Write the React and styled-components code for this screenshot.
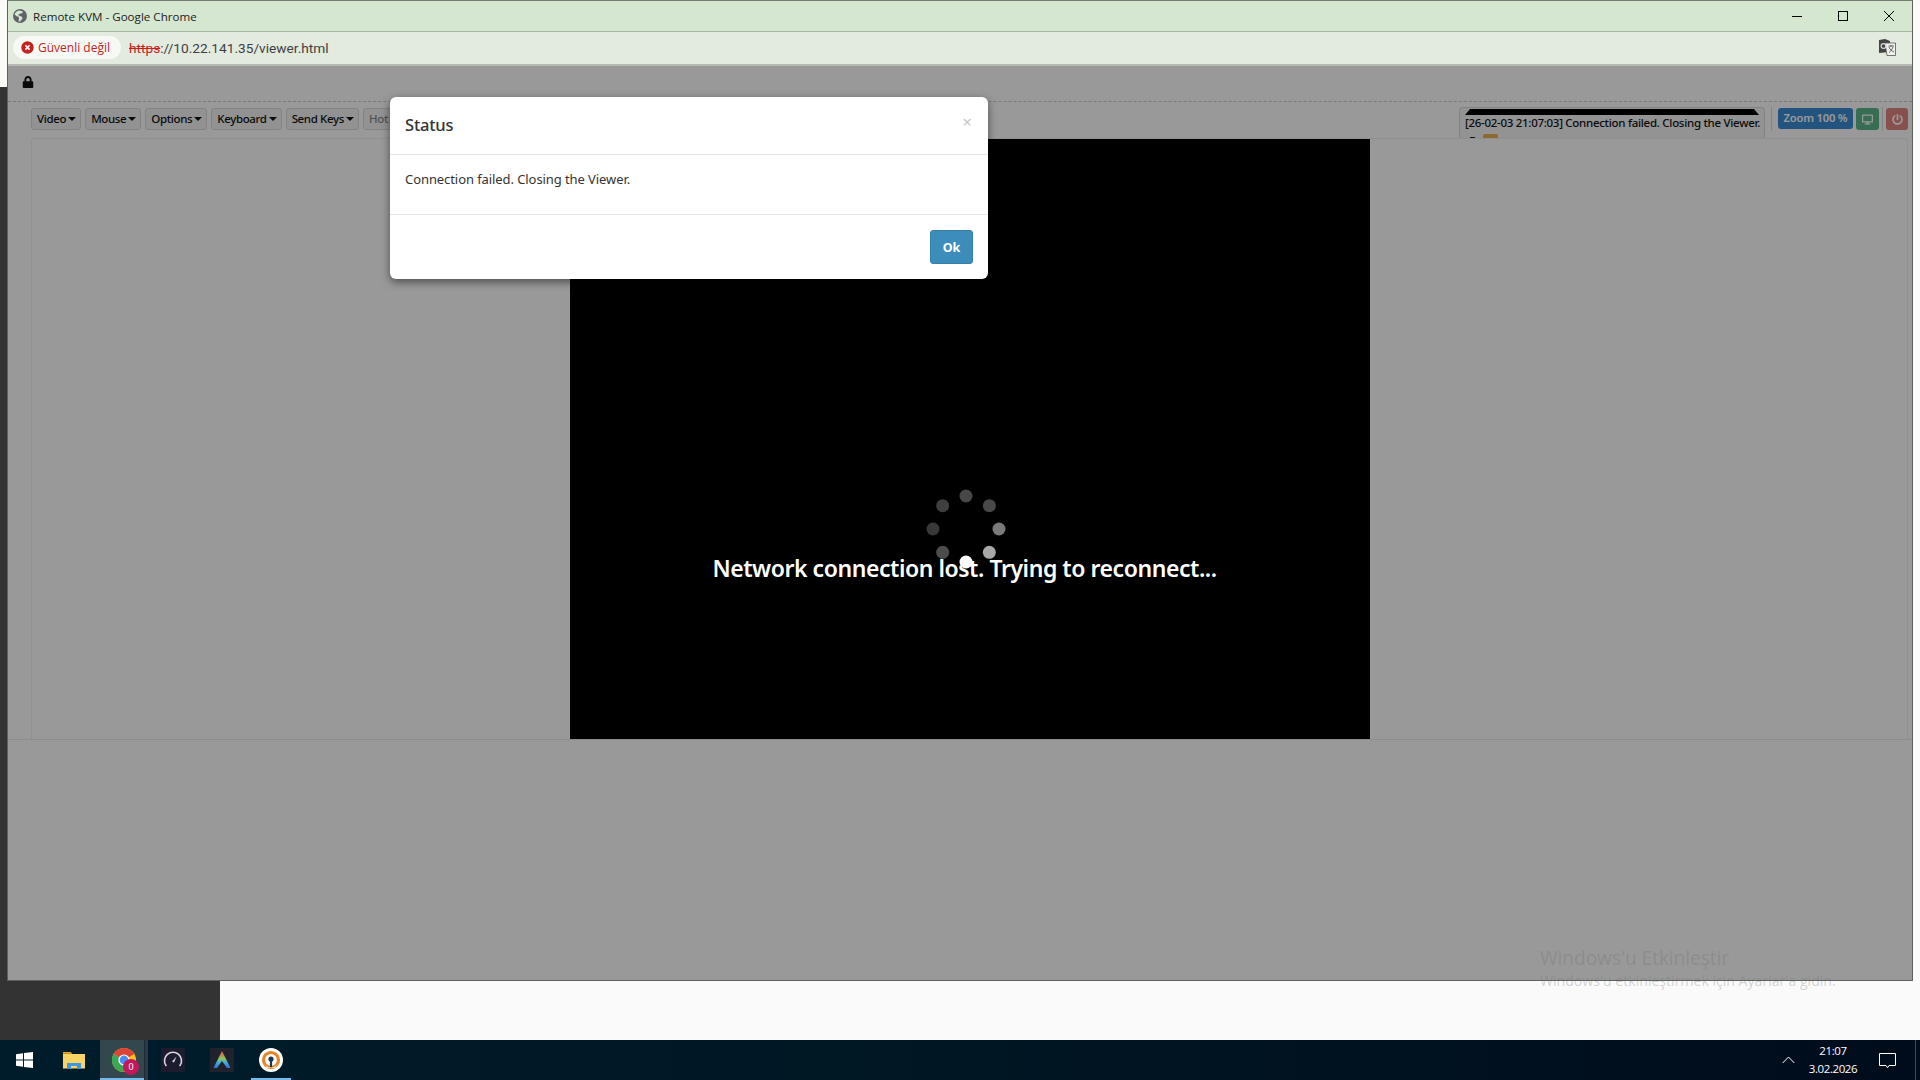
import React from 'react';
import styled, {createGlobalStyle} from 'styled-components';
import {FaLock, FaDesktop, FaPowerOff} from 'react-icons/fa';

const GlobalStyle=createGlobalStyle`
  html,body{margin:0;padding:0;width:1920px;height:1080px;overflow:hidden;}
  *{box-sizing:border-box;}
`;
const WEB_FONT=`"Noto Sans","Open Sans",sans-serif`;
const WIN_FONT=`"Open Sans","Noto Sans",sans-serif`;

const Page=styled.div`
  width:1920px;
  height:1080px;
  display:flex;
  flex-direction:column;
  font-family:${WEB_FONT};
`;
const Desktop=styled.div`
  position:relative;
  height:1040px;
  background:#fafafa;
`;
const BackSidebar=styled.div`
  width:220px;
  height:100%;
  padding-top:87px;
  background:#fafaf6;
`;
const BackSidebarDark=styled.div`
  height:100%;
  background:#333;
`;
const Window=styled.div`
  position:absolute;
  left:7px;
  top:0;
  width:1906px;
  height:981px;
  display:flex;
  flex-direction:column;
  border:1px solid #5a625a;
  border-top-color:#747c74;
`;
const TitleBar=styled.div`
  height:31px;
  display:flex;
  align-items:center;
  padding-left:5px;
  background:#d6e7d1;
  border-bottom:1px solid #a9b5a6;
  font-family:${WIN_FONT};
  font-size:11.6px;
  color:#222;
`;
const TitleText=styled.span`
  margin-left:6px;
  flex:1;
`;
const WinButton=styled.div`
  width:46px;
  height:30px;
  display:flex;
  align-items:center;
  justify-content:center;
`;
const AddressBar=styled.div`
  height:34px;
  display:flex;
  align-items:center;
  padding:0 16px 1px 5px;
  background:#e3ebdf;
  border-bottom:2px solid #b4b9b1;
`;
const SecurityChip=styled.div`
  width:108px;
  height:23px;
  display:flex;
  align-items:center;
  gap:4px;
  padding-left:8px;
  border-radius:12px;
  background:#f6f9f4;
  font-family:${WIN_FONT};
  font-size:12px;
  color:#c5221f;
`;
const Url=styled.div`
  margin-left:8px;
  flex:1;
  font-family:"Roboto",sans-serif;
  font-size:13.7px;
  color:#3c4043;
`;
const Struck=styled.span`
  color:#c5221f;
  text-decoration:line-through;
`;
const Content=styled.div`
  position:relative;
  flex:1;
  display:flex;
  flex-direction:column;
  background:#fff;
  isolation:isolate;
  overflow:hidden;
`;
const LockRow=styled.div`
  height:36px;
  flex:none;
  display:flex;
  align-items:center;
  padding:0 0 4px 14px;
  border-bottom:1px dashed #ccc;
  font-size:12px;
  color:#111;
`;
const Toolbar=styled.div`
  height:36px;
  flex:none;
  display:flex;
  align-items:flex-start;
  padding:6px 4px 0 23px;
  gap:4px;
`;
const MenuButton=styled.div`
  height:22px;
  display:flex;
  align-items:center;
  padding:0 4px 1px 5px;
  gap:2px;
  background:#f4f4f4;
  border:1px solid #dcdcdc;
  border-radius:3px;
  font-size:11.5px;
  font-weight:500;
  letter-spacing:-.36px;
  color:#111;
  white-space:nowrap;
`;
const MenuMuted=styled(MenuButton)`
  width:60px;
  color:#888;
`;
const Caret=styled.span`
  width:0;
  height:0;
  margin-top:1px;
  border-left:4px solid transparent;
  border-right:4px solid transparent;
  border-top:4px solid #111;
`;
const RightGroup=styled.div`
  margin-left:auto;
  display:flex;
  align-items:flex-start;
`;
const LogBox=styled.div`
  width:306px;
  height:31px;
  overflow:hidden;
  padding:1px 5px 0;
  background:#f6f6f6;
  border:1px solid #ddd;
  border-bottom:none;
  border-radius:4px 4px 0 0;
  font-size:11.5px;
  font-weight:500;
  letter-spacing:-.29px;
  color:#111;
  white-space:nowrap;
  margin-top:-1px;
`;
const LogBar=styled.div`
  height:6px;
  background:#000;
  clip-path:polygon(5px 0,calc(100% - 5px) 0,100% 100%,0 100%);
`;
const LogLine=styled.div`
  height:17px;
  line-height:15px;
`;
const LogExtra=styled.div`
  display:flex;
  align-items:flex-start;
  gap:2px;
  padding:2px 0 0 5px;
`;
const LogDots=styled.span`
  width:5px;
  height:2px;
  margin-top:3px;
  background:#222;
`;
const LogBadge=styled.div`
  margin-left:6px;
  width:15px;
  height:10px;
  border-radius:2px;
  background:#f0ad4e;
`;
const VDivider=styled.div`
  width:1px;
  height:24px;
  margin:-1px ${p=>p.$gap}px 0;
  background:#ddd;
`;
const ZoomButton=styled.div`
  width:75px;
  height:21px;
  display:flex;
  align-items:center;
  justify-content:center;
  padding-bottom:2px;
  border-radius:3px;
  background:#3a8dd4;
  font-size:11.2px;
  font-weight:600;
  letter-spacing:-.2px;
  color:#fff;
`;
const IconButton=styled.div`
  width:${p=>p.$w}px;
  height:22px;
  margin-left:${p=>p.$left||0}px;
  display:flex;
  align-items:center;
  justify-content:center;
  border-radius:3px;
  background:${p=>p.$bg};
  color:#fff;
  font-size:11px;
`;
const Viewer=styled.div`
  height:602px;
  flex:none;
  padding:0 4px 0 23px;
  border-bottom:1px solid #e8e8f4;
`;
const ViewerPanel=styled.div`
  height:100%;
  display:flex;
  justify-content:center;
  border:1px solid #f0f0f0;
  border-bottom:none;
  border-radius:4px 4px 0 0;
`;
const VideoArea=styled.div`
  position:relative;
  width:800px;
  height:600px;
  background:#000;
`;
const Spinner=styled.svg`
  position:absolute;
  left:351px;
  top:345px;
  z-index:3;
`;
const LostMessage=styled.div`
  position:absolute;
  left:0;
  right:0;
  top:412px;
  z-index:3;
  text-align:center;
  padding-right:10px;
  font-size:23px;
  font-weight:600;
  letter-spacing:-.45px;
  line-height:34px;
  color:#fff;
  white-space:nowrap;
`;
const Backdrop=styled.div`
  position:absolute;
  inset:0;
  z-index:1;
  background:rgba(0,0,0,.4);
`;
const Modal=styled.div`
  position:absolute;
  left:382px;
  top:31px;
  z-index:2;
  width:598px;
  height:182px;
  display:flex;
  flex-direction:column;
  background:#fff;
  border-radius:6px;
  box-shadow:0 3px 9px rgba(0,0,0,.5);
  font-size:13px;
  color:#333;
`;
const ModalHeader=styled.div`
  height:58px;
  display:flex;
  justify-content:space-between;
  padding:13px 15px 0;
  border-bottom:1px solid #e5e5e5;
`;
const ModalTitle=styled.div`
  font-size:16.5px;
  font-weight:500;
  line-height:30px;
  letter-spacing:-.2px;
`;
const CloseMark=styled.div`
  font-size:17px;
  line-height:20px;
  color:#c8c8c8;
  margin:2px 1px 0 0;
`;
const ModalBody=styled.div`
  height:60px;
  padding:14px 15px;
  line-height:20px;
  letter-spacing:-.08px;
  border-bottom:1px solid #e5e5e5;
`;
const ModalFooter=styled.div`
  flex:1;
  display:flex;
  justify-content:flex-end;
  align-items:flex-start;
  padding:15px 15px 0;
`;
const OkButton=styled.div`
  width:43px;
  height:34px;
  display:flex;
  align-items:center;
  justify-content:center;
  background:#3c8dbc;
  border:1px solid #367fa9;
  border-radius:3px;
  font-size:12.5px;
  font-weight:700;
  color:#fff;
`;
const Watermark=styled.div`
  position:absolute;
  left:1540px;
  top:944px;
  z-index:5;
  font-family:${WIN_FONT};
  color:rgba(110,110,110,.3);
  white-space:nowrap;
`;
const WatermarkTitle=styled.div`
  font-size:19.2px;
  line-height:27px;
  letter-spacing:-.1px;
`;
const WatermarkSub=styled.div`
  font-size:14.1px;
  line-height:19px;
`;
const Taskbar=styled.div`
  height:40px;
  display:flex;
  align-items:center;
  background:linear-gradient(90deg,#001c2b,#001825 40%,#000c1c);
  color:#fff;
`;
const TaskItem=styled.div`
  position:relative;
  width:${p=>p.$w||48}px;
  height:40px;
  flex:none;
  margin-left:${p=>p.$ml||0}px;
  padding-left:${p=>p.$pl||0}px;
  display:flex;
  align-items:center;
  justify-content:${p=>p.$pl?'flex-start':'center'};
  background:${p=>p.$active?'#33474f':'transparent'};
  &::after{
    content:'';
    display:${p=>p.$open?'block':'none'};
    position:absolute;
    left:0;
    right:0;
    bottom:0;
    height:2px;
    background:#76b9ed;
  }
`;
const ChromeSplit=styled.div`
  width:4px;
  height:40px;
  background:#2a3d46;
  border-left:1px solid #1b2c35;
`;
const Tray=styled.div`
  margin-left:auto;
  display:flex;
  align-items:center;
  height:40px;
`;
const Clock=styled.div`
  width:52px;
  margin-left:12px;
  text-align:center;
  font-family:${WIN_FONT};
  font-size:11.5px;
  line-height:18px;
  letter-spacing:-.4px;
  white-space:nowrap;
`;
const NotifyButton=styled.div`
  width:56px;
  display:flex;
  justify-content:center;
  padding-top:2px;
`;
const TrayEdge=styled.div`
  width:5px;
  height:40px;
  border-left:1px solid #3d4855;
`;
const BadgeCircle=styled.div`
  position:absolute;
  right:-3px;
  bottom:-3px;
  width:16px;
  height:16px;
  border-radius:50%;
  background:#c2185b;
  font-size:9px;
  line-height:16px;
  text-align:center;
  color:#fff;
`;
const ChromeWrap=styled.div`
  position:relative;
  width:24px;
  height:24px;
`;

const MENUS=['Video','Mouse','Options','Keyboard','Send Keys'];
// bright dot is at the bottom, fading clockwise
const DOTS=[
  {a:90,c:'#fff'},{a:45,c:'#a8a8a8'},{a:0,c:'#7a7a7a'},{a:-45,c:'#484848'},
  {a:-90,c:'#484848'},{a:-135,c:'#3f3f3f'},{a:180,c:'#383838'},{a:135,c:'#4c4c4c'},
];

const Globe=()=>(
  <svg width="14" height="14" viewBox="0 0 14 14">
    <circle cx="7" cy="7" r="7" fill="#5f6368"/>
    <path d="M6 1.5 C4 2 2 3.5 1.6 5.5 L4 7.5 L5.5 7.5 L6 9.5 L5.5 12.5 L7 12.5 L9.5 9.5 L9 7.8 L6.3 6.8 L5 5.8 L6.5 5 L8 4.2 L9.5 4.2 L9.5 2.2 Z" fill="#d6e7d1"/>
  </svg>
);
const ErrorIcon=()=>(
  <svg width="13" height="13" viewBox="0 0 13 13">
    <circle cx="6.5" cy="6.5" r="6.2" fill="#c5221f"/>
    <path d="M4.4 4.4 L8.6 8.6 M8.6 4.4 L4.4 8.6" stroke="#fff" strokeWidth="1.5"/>
  </svg>
);
const TranslateIcon=()=>(
  <svg width="17" height="18" viewBox="0 0 17 18">
    <path d="M0 1 L6 0 L11 2 L11 13 L0 14 Z" fill="#444"/>
    <path d="M6 4 H16.5 V16.5 H8 Z" fill="#eef1ec" stroke="#555" strokeWidth=".8"/>
    <circle cx="4.5" cy="7" r="2.4" fill="none" stroke="#ddd" strokeWidth="1.1"/>
    <path d="M9.5 7 H15 M12 6 V8 M10 8 C11 11 13 12 15 13 M14 8 C13 10.5 12 12 10 13.5" stroke="#555" strokeWidth=".9" fill="none"/>
  </svg>
);
const WinLogo=()=>(
  <svg width="17" height="16" viewBox="0 0 17 16" fill="#fff">
    <path d="M0 2.3 L7 1.3 V7.6 H0 Z M8 1.1 L17 0 V7.6 H8 Z M0 8.5 H7 V14.7 L0 13.7 Z M8 8.5 H17 V16 L8 14.9 Z"/>
  </svg>
);
const ExplorerIcon=()=>(
  <svg width="22" height="18" viewBox="0 0 22 18">
    <path d="M0 1 H8 L9 3 H21 V17 H0 Z" fill="#e3a92c"/>
    <path d="M0 3 H22 V17.5 H0 Z" fill="#fbd466"/>
    <path d="M4 12 V18 H8 V15 H14 V18 H18 V12 Z" fill="#3f97df"/>
    <path d="M0 2 H8 V3 H0 Z" fill="#c98b1a"/>
  </svg>
);
const ChromeIcon=()=>(
  <ChromeWrap>
    <svg width="24" height="24" viewBox="0 0 24 24">
      <circle cx="12" cy="12" r="12" fill="#fbc116"/>
      <path d="M12 12 L1.6 6 A12 12 0 0 1 22.4 6 Z" fill="#db4437"/>
      <path d="M12 12 L1.6 6 A12 12 0 0 0 12 24 Z" fill="#3aa757"/>
      <circle cx="12" cy="12" r="5.6" fill="#fff"/>
      <circle cx="12" cy="12" r="4.4" fill="#4a8af4"/>
    </svg>
    <BadgeCircle>0</BadgeCircle>
  </ChromeWrap>
);
const GaugeIcon=()=>(
  <svg width="24" height="24" viewBox="0 0 24 24">
    <rect width="24" height="24" rx="1" fill="#1c1c2e"/>
    <path d="M5 17.5 A8.5 8.5 0 1 1 19 17.5" fill="none" stroke="#d8d8e0" strokeWidth="1.6" strokeLinecap="round"/>
    <path d="M11 13.5 L15.5 8.5 L13 14.5 Z" fill="#d8d8e0"/>
  </svg>
);
const ArcIcon=()=>(
  <svg width="24" height="24" viewBox="0 0 24 24">
    <defs>
      <linearGradient id="arcgrad" x1="0" y1="0" x2="0" y2="1">
        <stop offset="0" stopColor="#e8504f"/>
        <stop offset=".45" stopColor="#8cc65a"/>
        <stop offset=".7" stopColor="#3fa9e0"/>
        <stop offset="1" stopColor="#2f6fe0"/>
      </linearGradient>
    </defs>
    <rect width="24" height="24" fill="#20232b"/>
    <path d="M12 3 L3.5 20 L7 20 L12 13 L17 20 L20.5 20 Z" fill="url(#arcgrad)"/>
  </svg>
);
const VpnIcon=()=>(
  <svg width="24" height="24" viewBox="0 0 24 24">
    <circle cx="12" cy="12" r="12" fill="#fff"/>
    <circle cx="12" cy="12" r="7.5" fill="none" stroke="#e8842a" strokeWidth="3.2"/>
    <path d="M5 16 A8.5 8.5 0 0 0 19 16 L16 20 H8 Z" fill="#fff"/>
    <circle cx="12" cy="11" r="2.6" fill="#1a3550"/>
    <rect x="10.9" y="11" width="2.2" height="8" fill="#1a3550"/>
  </svg>
);
const ChevronUp=()=>(
  <svg width="13" height="8" viewBox="0 0 13 8"><path d="M.7 7 L6.5 1 L12.3 7" fill="none" stroke="#fff" strokeWidth="1"/></svg>
);
const NotifyIcon=()=>(
  <svg width="17" height="16" viewBox="0 0 17 16"><path d="M.5 .5 H16.5 V12.5 H10 L8.5 14.8 L7 12.5 H.5 Z" fill="none" stroke="#fff"/></svg>
);

export default function App(){
  return (
    <Page>
      <GlobalStyle/>
      <Desktop>
        <BackSidebar><BackSidebarDark/></BackSidebar>
        <Window>
          <TitleBar>
            <Globe/>
            <TitleText>Remote KVM - Google Chrome</TitleText>
            <WinButton><svg width="10" height="1"><rect width="10" height="1" fill="#000"/></svg></WinButton>
            <WinButton><svg width="10" height="10"><rect x=".5" y=".5" width="9" height="9" fill="none" stroke="#000"/></svg></WinButton>
            <WinButton><svg width="10" height="10"><path d="M0 0 L10 10 M10 0 L0 10" stroke="#000" strokeWidth="1"/></svg></WinButton>
          </TitleBar>
          <AddressBar>
            <SecurityChip><ErrorIcon/>Güvenli değil</SecurityChip>
            <Url><Struck>https</Struck>://10.22.141.35/viewer.html</Url>
            <TranslateIcon/>
          </AddressBar>
          <Content>
            <LockRow><FaLock/></LockRow>
            <Toolbar>
              {MENUS.map(m=>(
                <MenuButton key={m}>{m}<Caret/></MenuButton>
              ))}
              <MenuMuted>Hot</MenuMuted>
              <RightGroup>
                <LogBox>
                  <LogBar/>
                  <LogLine>[26-02-03 21:07:03] Connection failed. Closing the Viewer.</LogLine>
                  <LogExtra><LogDots/><LogBadge/></LogExtra>
                </LogBox>
                <VDivider $gap={6}/>
                <ZoomButton>Zoom 100 %</ZoomButton>
                <IconButton $w={23} $left={3} $bg="#5cb88a"><FaDesktop/></IconButton>
                <VDivider $gap={3}/>
                <IconButton $w={22} $bg="#e0857f"><FaPowerOff/></IconButton>
              </RightGroup>
            </Toolbar>
            <Viewer>
              <ViewerPanel>
                <VideoArea>
                  <Spinner width="90" height="90" viewBox="-45 -45 90 90">
                    {DOTS.map(d=>(
                      <circle key={d.a} r="6.5" fill={d.c}
                        cx={33*Math.cos(d.a*Math.PI/180)} cy={33*Math.sin(d.a*Math.PI/180)}/>
                    ))}
                  </Spinner>
                  <LostMessage>Network connection lost. Trying to reconnect...</LostMessage>
                </VideoArea>
              </ViewerPanel>
            </Viewer>
            <Backdrop/>
            <Modal>
              <ModalHeader>
                <ModalTitle>Status</ModalTitle>
                <CloseMark>×</CloseMark>
              </ModalHeader>
              <ModalBody>Connection failed. Closing the Viewer.</ModalBody>
              <ModalFooter><OkButton>Ok</OkButton></ModalFooter>
            </Modal>
          </Content>
        </Window>
        <Watermark>
          <WatermarkTitle>Windows'u Etkinleştir</WatermarkTitle>
          <WatermarkSub>Windows'u etkinleştirmek için Ayarlar'a gidin.</WatermarkSub>
        </Watermark>
      </Desktop>
      <Taskbar>
        <TaskItem><WinLogo/></TaskItem>
        <TaskItem $w={52}><ExplorerIcon/></TaskItem>
        <TaskItem $w={44} $pl={12} $active $open><ChromeIcon/></TaskItem>
        <ChromeSplit/>
        <TaskItem $w={24} $ml={13}><GaugeIcon/></TaskItem>
        <TaskItem $w={24} $ml={25}><ArcIcon/></TaskItem>
        <TaskItem $w={40} $ml={17} $open><VpnIcon/></TaskItem>
        <Tray>
          <ChevronUp/>
          <Clock>21:07<br/>3.02.2026</Clock>
          <NotifyButton><NotifyIcon/></NotifyButton>
          <TrayEdge/>
        </Tray>
      </Taskbar>
    </Page>
  );
}
